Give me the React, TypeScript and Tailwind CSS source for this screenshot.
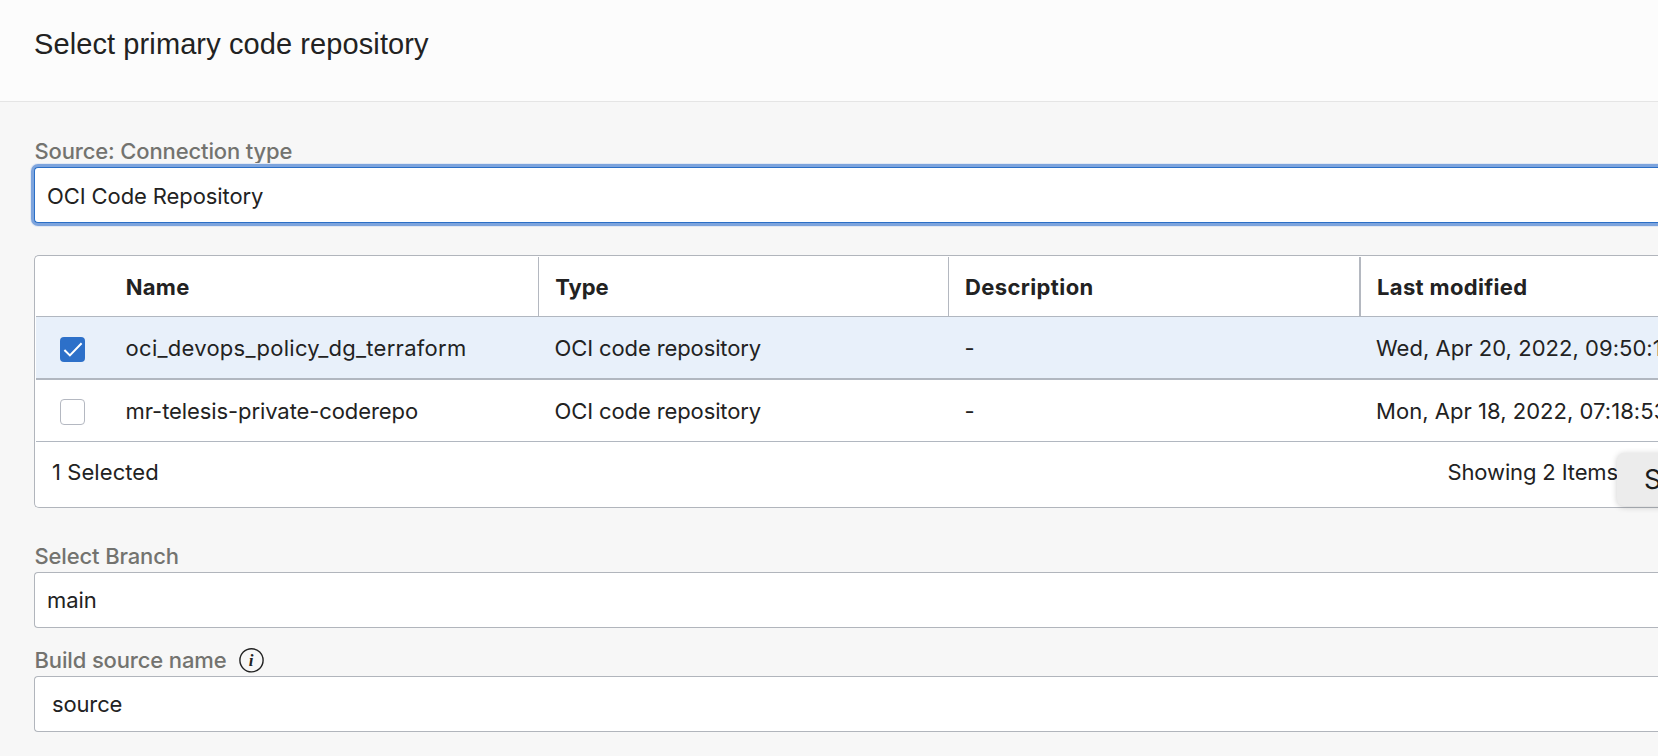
import React from "react";
import type { ReactNode } from "react";

function Label({ children }: { children: ReactNode }) {
  return (
    <label className="flex h-7 items-center whitespace-nowrap pl-[0.5px] font-medium leading-7 tracking-[-0.14px] text-[#73736f]">
      {children}
    </label>
  );
}

function InfoIcon() {
  return (
    <span className="relative ml-3 flex h-[25px] w-[25px] items-center justify-center">
      <svg className="absolute inset-0" width="25" height="25" viewBox="0 0 25 25" fill="none">
        <circle cx="12.5" cy="12.3" r="11.6" stroke="#222" strokeWidth="1.4" />
      </svg>
      <span className="font-['Liberation_Serif',serif] text-[17px] font-bold italic leading-none tracking-normal text-[#222]">
        i
      </span>
    </span>
  );
}

function Checkbox({ checked }: { checked?: boolean }) {
  return checked ? (
    <span className="flex h-[25px] w-[25px] items-center justify-center rounded-[4px] bg-[#2d70c9]">
      <svg width="25" height="25" viewBox="0 0 25 25" fill="none">
        <path d="M4.4 13 9.9 18.4 21.6 6.2" stroke="#fff" strokeWidth="2" />
      </svg>
    </span>
  ) : (
    <span className="h-[26px] w-[25px] rounded-[4px] border border-[#b4b8c1] bg-white" />
  );
}

function HeadCell({ children, className }: { children: ReactNode; className: string }) {
  return (
    <div className={`flex items-center border-[#b4b8c0] pt-px font-bold ${className}`}>
      <span>{children}</span>
    </div>
  );
}

type Repo = { name: string; nameClass: string; type: string; description: string; modified: string };

const repos: Repo[] = [
  {
    name: "oci_devops_policy_dg_terraform",
    nameClass: "tracking-[0.27px]",
    type: "OCI code repository",
    description: "-",
    modified: "Wed, Apr 20, 2022, 09:50:1",
  },
  {
    name: "mr-telesis-private-coderepo",
    nameClass: "tracking-[-0.09px]",
    type: "OCI code repository",
    description: "-",
    modified: "Mon, Apr 18, 2022, 07:18:53",
  },
];

const columns = "grid grid-cols-[89px_414px_410px_412px_1fr]";

function RepoRow({ repo, selected }: { repo: Repo; selected?: boolean }) {
  return (
    <div
      className={`${columns} border-[#b1b7c0] leading-[62px] ${
        selected ? "h-[63px] border-b-2 bg-[#e8f0fa]" : "h-[62px] border-b bg-white"
      }`}
    >
      <div className={selected ? "pl-6 pt-5" : "pl-6 pt-[19px]"}>
        <div className="flex">
          <Checkbox checked={selected} />
        </div>
      </div>
      <div className={`pl-[0.6px] ${repo.nameClass}`}>{repo.name}</div>
      <div className="pl-[15.6px] tracking-[-0.12px]">{repo.type}</div>
      <div className="pl-[15.6px]">{repo.description}</div>
      <div className="min-w-0 overflow-hidden pl-[15px] tracking-[0.035px]">{repo.modified}</div>
    </div>
  );
}

export default function App() {
  return (
    <div className="relative flex h-[756px] w-[1658px] flex-col overflow-hidden whitespace-nowrap bg-[#f7f7f7] font-['Inter',sans-serif] text-[22px] text-[#222]">
      <header className="h-[102px] shrink-0 border-b border-[#e5e5e5] bg-[#fcfcfc] pl-[34px] pt-[26px]">
        <h1 className="font-['Liberation_Sans',sans-serif] text-[29px] leading-9 tracking-[0.1px]">
          Select primary code repository
        </h1>
      </header>

      <main className="flex flex-col pl-[34px] pt-[35px]">
        <section className="flex flex-col gap-0.5">
          <Label>Source: Connection type</Label>
          <div className="h-14 rounded-l-[4px] border border-r-0 border-[#2b6fc6] bg-white pl-3 pt-px leading-[54px] tracking-[-0.1px] shadow-[0_0_0_3px_#7da4dd,0_0_0_4px_#e3e9f3]">
            OCI Code Repository
          </div>
        </section>

        <section className="mt-8 flex h-[253px] flex-col rounded-l-[5px] border border-r-0 border-[#b1b5bc] bg-white pl-px">
          <div className={`${columns} h-[61px] border-b border-[#b1b7c0] pt-px`}>
            <div />
            <HeadCell className="border-r pl-[0.7px] tracking-[0.3px]">Name</HeadCell>
            <HeadCell className="border-r pl-[16.2px]">Type</HeadCell>
            <HeadCell className="border-r-2 pl-4 tracking-[0.38px]">Description</HeadCell>
            <HeadCell className="pl-4 tracking-[0.34px]">Last modified</HeadCell>
          </div>
          <RepoRow repo={repos[0]} selected />
          <RepoRow repo={repos[1]} />
          <div className="flex h-[60px] items-center justify-between pl-4 pr-10">
            <span className="tracking-[0.07px]">1 Selected</span>
            <span className="tracking-[-0.13px]">Showing 2 Items</span>
          </div>
        </section>

        <section className="mt-[34px] flex flex-col gap-0.5">
          <Label>Select Branch</Label>
          <div className="h-14 rounded-l-[4px] border border-r-0 border-[#b1b5bc] bg-white pl-3 leading-[54px] tracking-[-0.1px]">
            main
          </div>
        </section>

        <section className="mt-[18px] flex flex-col gap-0.5">
          <Label>
            Build source name
            <InfoIcon />
          </Label>
          <div className="h-14 rounded-l-[4px] border border-r-0 border-[#b1b5bc] bg-white pl-[17px] leading-[54px] tracking-[-0.15px]">
            source
          </div>
        </section>
      </main>

      <div className="absolute left-[1617px] top-[453px] h-[53px] w-[60px] rounded-[7px] bg-[#ececec] pl-[27px] text-[27px] leading-[53px] text-[#1c1c1c] shadow-[0_1px_6px_rgba(0,0,0,0.2)]">
        S
      </div>
    </div>
  );
}
